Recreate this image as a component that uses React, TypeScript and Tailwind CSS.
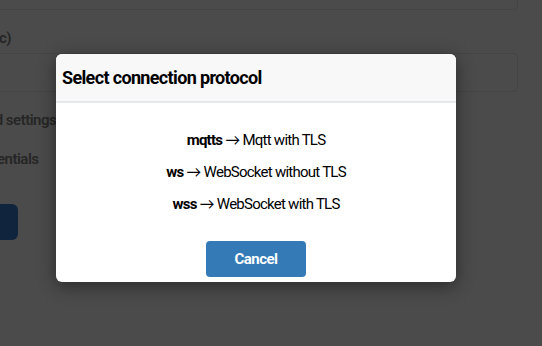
import React from 'react';

const protocols = [
  { key: 'mqtts', label: 'Mqtt with TLS' },
  { key: 'ws', label: 'WebSocket without TLS' },
  { key: 'wss', label: 'WebSocket with TLS' },
];

function Backdrop() {
  return (
    <div className="flex w-[542px] flex-col tracking-[-0.5px]">
      <div className="-mt-[30px] -ml-[40px] h-[40px] w-[558px] rounded border border-[#444444]" />
      <p className="mt-[17px] -ml-[1px] text-[15px] font-semibold leading-[22px] text-[#262626]">c)</p>
      <div className="mt-[4px] -ml-[40px] h-[39px] w-[558px] rounded border border-[#444444]" />
      <p className="mt-[17px] -ml-[60px] text-[15px] font-semibold leading-[22px] text-[#262626]">Advanced settings</p>
      <p className="mt-[17px] -ml-[58px] text-[15px] font-semibold leading-[22px] text-[#262626]">Use credentials</p>
      <div className="mt-[34px] -ml-[40px] h-[36px] w-[58px] rounded-md bg-[#10253d]" />
    </div>
  );
}

export default function App() {
  return (
    <div
      className="relative h-[346px] w-[542px] overflow-hidden bg-[#4b4b4b]"
      style={{ fontFamily: 'Roboto, "Open Sans", sans-serif' }}
    >
      <Backdrop />
      <div className="absolute left-[56px] top-[54px] flex w-[400px] flex-col overflow-hidden rounded-md bg-white shadow-[0_4px_18px_rgba(0,0,0,0.45)]">
        <div className="flex h-[49px] items-center border-b-2 border-[#e5e9ee] bg-[#f8f8f8] px-[6px]">
          <h3 className="text-[18px] font-bold tracking-[-0.65px] text-black">Select connection protocol</h3>
        </div>
        <div className="flex flex-col items-center gap-[9px] pt-[25px] text-[15px] leading-[22px] tracking-[-0.75px] text-black">
          {protocols.map((p) => (
            <p key={p.key}>
              <span className="font-bold">{p.key}</span>{' '}
              <span className="font-['Lato',sans-serif]">→</span> {p.label}
            </p>
          ))}
        </div>
        <div className="flex justify-center pt-[26px] pb-[5px]">
          <button className="h-[36px] w-[100px] rounded bg-[#337ab7] text-[15px] font-bold tracking-[-0.5px] text-white">
            Cancel
          </button>
        </div>
      </div>
    </div>
  );
}
